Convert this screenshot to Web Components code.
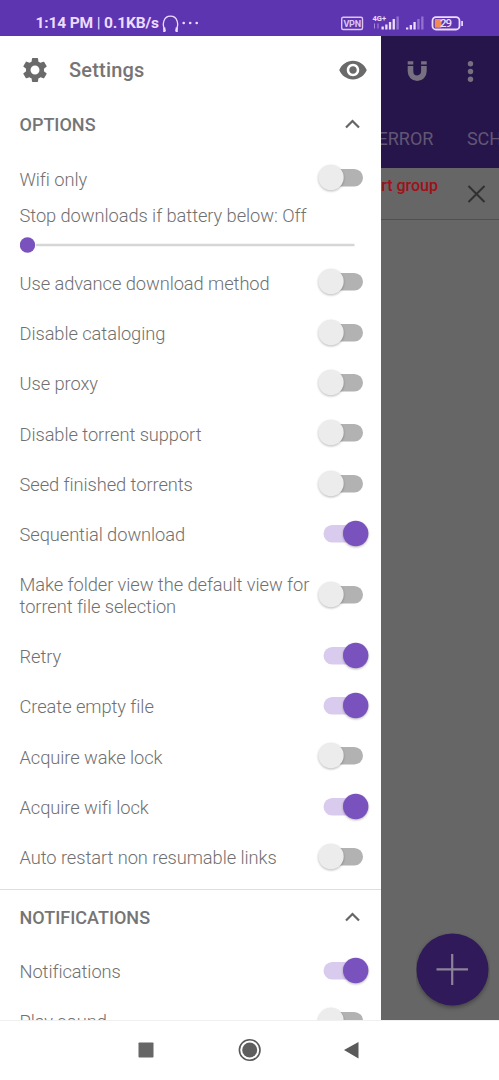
<!DOCTYPE html>
<html lang="en">
<head>
<meta charset="utf-8">
<title>Settings</title>
<style>
html,body{margin:0;height:100%;overflow:hidden;background:#fff;font-family:Roboto,"Noto Sans",sans-serif}
</style>
</head>
<body>
<phone-screen>
  <status-bar slot="status"></status-bar>
  <settings-drawer slot="drawer" heading="Settings">
    <section-head>OPTIONS</section-head>
    <setting-row class="first">Wifi only</setting-row>
    <battery-slider>Stop downloads if battery below: Off</battery-slider>
    <setting-row>Use advance download method</setting-row>
    <setting-row>Disable cataloging</setting-row>
    <setting-row>Use proxy</setting-row>
    <setting-row>Disable torrent support</setting-row>
    <setting-row>Seed finished torrents</setting-row>
    <setting-row on>Sequential download</setting-row>
    <setting-row tall>Make folder view the default view for<br>torrent file selection</setting-row>
    <setting-row on>Retry</setting-row>
    <setting-row on>Create empty file</setting-row>
    <setting-row>Acquire wake lock</setting-row>
    <setting-row on>Acquire wifi lock</setting-row>
    <setting-row>Auto restart non resumable links</setting-row>
    <section-head divided>NOTIFICATIONS</section-head>
    <setting-row on>Notifications</setting-row>
    <setting-row>Play sound</setting-row>
  </settings-drawer>
  <download-page slot="page"></download-page>
  <nav-bar slot="nav"></nav-bar>
</phone-screen>
<script>
function define(name, html) {
  const t = document.createElement('template');
  t.innerHTML = html;
  customElements.define(name, class extends HTMLElement {
    constructor() {
      super();
      this.attachShadow({mode: 'open'}).append(t.content.cloneNode(true));
      const h = this.shadowRoot.querySelector('[data-heading]');
      if (h) h.textContent = this.getAttribute('heading');
    }
  });
}

define('phone-screen', `
<style>
:host{display:grid;width:499px;height:1080px;grid-template:36px 984px 60px / 381px 118px;overflow:hidden}
::slotted([slot=status]),::slotted([slot=nav]){grid-column:1 / 3}
</style>
<slot name="status"></slot><slot name="drawer"></slot><slot name="page"></slot><slot name="nav"></slot>`);

define('status-bar', `
<style>
:host{display:flex;align-items:center;background:#5e35b1;color:#ecdcff;height:36px;box-sizing:border-box;padding:9px 34px 0 35.500px;font-weight:700;font-size:15.500px;line-height:20px}
.time{white-space:pre;width:123.500px;letter-spacing:-.14px}
.bar{font-weight:400}
svg{display:block;flex:none}
.icons{margin-left:auto}
</style>
<span class="time">1:14 PM <span class="bar">|</span> 0.1KB/s</span>
<svg width="42" height="20" viewBox="0 0 42 20" style="margin-left:2px"><path d="M4.300 18C.5 11.500 2.500 3.200 9.500 3.200S18.500 11.500 14.700 18" fill="none" stroke="#ecdcff" stroke-width="1.300"/><path d="M3.300 14.500v4.500M15.700 14.500v4.500" stroke="#ecdcff" stroke-width="2.200"/><g fill="#ecdcff"><circle cx="22.700" cy="10" r="1.300"/><circle cx="29.200" cy="10" r="1.300"/><circle cx="35.700" cy="10" r="1.300"/></g></svg>
<svg class="icons" width="126" height="20" viewBox="339.500 12.500 126 20">
  <rect x="342.200" y="16.700" width="20.800" height="12.300" rx="1.500" fill="none" stroke="#d9c6f5" stroke-width="1.400"/>
  <text x="344" y="26.200" font-size="9" font-weight="700" fill="#d9c6f5" textLength="17.500">VPN</text>
  <text x="373" y="20.400" font-size="7.500" font-weight="700" fill="#ecdcff" textLength="13.500">4G+</text>
  <path d="M375 23v5M378.500 23v5" stroke="#a98bdc" stroke-width="1"/>
  <g fill="#ecdcff"><rect x="382" y="26" width="2.300" height="3"/><rect x="385.700" y="24" width="2.300" height="5"/><rect x="389.400" y="21.500" width="2.300" height="7.500"/><rect x="393.100" y="18.500" width="2.300" height="10.500"/><rect x="406.500" y="27" width="2.300" height="2"/><rect x="410.200" y="24.500" width="2.300" height="4.500"/><rect x="413.900" y="21.500" width="2.300" height="7.500"/></g>
  <g fill="#9372cf"><rect x="397" y="16" width="2.300" height="13"/><rect x="417.800" y="18.500" width="2.300" height="10.500"/><rect x="421.700" y="16" width="2.300" height="13"/></g>
  <rect x="433" y="16.700" width="27" height="12.300" rx="3.500" fill="none" stroke="#ecdcff" stroke-width="1.800"/>
  <rect x="435.300" y="18.600" width="6.700" height="8.600" rx="1" fill="#f08b55"/>
  <path d="M462.600 20.500v5" stroke="#ecdcff" stroke-width="1.700"/>
  <text x="440.500" y="26.900" font-size="11.500" font-weight="500" fill="#ecdcff" textLength="12">29</text>
</svg>`);

define('settings-drawer', `
<style>
:host{display:flex;flex-direction:column;background:#fff;overflow:hidden;height:984px;color:#757575}
header{display:flex;align-items:center;height:69px;box-sizing:border-box;flex:none;padding:0 13px 1px 20px}
h1{margin:0 auto 0 19px;font-size:20px;font-weight:500;letter-spacing:.2px;line-height:24px}
svg{fill:#6a6a6a;display:block}
</style>
<header>
<svg width="30" height="30" viewBox="0 0 24 24"><path d="M19.140 12.940c.04-.3.060-.61.060-.94 0-.32-.02-.64-.07-.94l2.030-1.580c.18-.14.230-.41.120-.61l-1.920-3.320c-.12-.22-.37-.29-.59-.22l-2.390.96c-.5-.38-1.030-.7-1.620-.94l-.36-2.540c-.04-.24-.24-.41-.48-.41h-3.840c-.24 0-.43.170-.47.410l-.36 2.540c-.59.240-1.130.570-1.620.940l-2.390-.96c-.22-.08-.47 0-.59.220L2.740 8.870c-.12.210-.08.470.120.610l2.030 1.580c-.05.300-.09.630-.09.940s.02.640.070.940l-2.030 1.580c-.18.140-.23.410-.12.610l1.920 3.320c.12.220.370.290.590.220l2.390-.96c.5.380 1.030.700 1.620.940l.36 2.540c.05.240.240.410.480.410h3.840c.24 0 .44-.17.470-.41l.36-2.540c.59-.24 1.130-.56 1.620-.94l2.390.960c.22.080.470 0 .59-.22l1.920-3.320c.12-.22.070-.47-.12-.61l-2.010-1.580zM12 15.600c-1.980 0-3.600-1.620-3.600-3.600s1.620-3.600 3.600-3.600 3.600 1.620 3.600 3.600-1.620 3.600-3.600 3.600z"/></svg>
<h1 data-heading></h1>
<svg width="30" height="30" viewBox="0 0 24 24"><path d="M12 4.500C7 4.500 2.730 7.610 1 12c1.730 4.390 6 7.500 11 7.500s9.270-3.110 11-7.500c-1.730-4.390-6-7.500-11-7.500zM12 17c-2.760 0-5-2.240-5-5s2.240-5 5-5 5 2.240 5 5-2.240 5-5 5zm0-8c-1.660 0-3 1.340-3 3s1.340 3 3 3 3-1.340 3-3-1.340-3-3-3z"/></svg>
</header>
<slot></slot>`);

define('section-head', `
<style>
:host{display:flex;align-items:center;justify-content:space-between;flex:none;height:40px;padding:0 20px 7px 19.500px;font-size:18px;font-weight:500;line-height:24px;color:#757575}
:host([divided]){border-top:1px solid #dedede;margin-top:5.500px;height:57px;padding-bottom:0}
svg{display:block;position:relative;top:-1px}
</style>
<slot></slot>
<svg width="17" height="12" viewBox="0 0 17 12"><path d="M2 9.500L8.500 3L15 9.500" fill="none" stroke="#666" stroke-width="2.200"/></svg>`);

define('toggle-switch', `
<style>
:host{display:block;width:56px;height:34px;flex:none;margin-bottom:2px}
svg{display:block}
.on{display:none}
:host([on]) .on{display:block}
:host([on]) .off{display:none}
circle{filter:drop-shadow(0 1px 1px rgba(0,0,0,.28))}
</style>
<svg class="off" width="56" height="34"><rect x="8" y="8" width="40" height="17.500" rx="8.750" fill="#b2b2b2"/><circle cx="16" cy="16.500" r="12.700" fill="#ececec"/></svg>
<svg class="on" width="56" height="34"><rect x="8.500" y="8" width="40" height="17.500" rx="8.750" fill="#d8cbee"/><circle cx="40.700" cy="16.500" r="12.700" fill="#7a52bd"/></svg>`);

define('setting-row', `
<style>
:host{display:flex;align-items:center;flex:none;height:50.300px;box-sizing:border-box;padding:0 10px 0 19.500px;font-size:18.300px;letter-spacing:-.07px;font-weight:300;line-height:21.500px;color:#707070}
:host([tall]){height:71.500px}
:host(.first){height:46px;margin-top:4.300px}
span{flex:1;white-space:nowrap}
</style>
<span><slot></slot></span><toggle-switch></toggle-switch>`);

define('battery-slider', `
<style>
:host{display:block;flex:none;height:56px;box-sizing:border-box;padding:3px 19px 0 19.500px;font-size:18.300px;letter-spacing:-.07px;font-weight:300;line-height:22px;color:#707070;white-space:nowrap}
svg{display:block;margin-top:10px}
</style>
<slot></slot>
<svg width="336" height="16"><path d="M16 8H334.500" stroke="#d6d6d6" stroke-width="2.500"/><circle cx="7.500" cy="8" r="7.700" fill="#7a52bd"/></svg>`);

define('download-page', `
<style>
:host{display:flex;flex-direction:column;background:#666;overflow:hidden;height:984px;position:relative}
.app{height:132px;background:#26154a;flex:none}
.actions{display:flex;height:70px;align-items:center}
.tabs{display:flex;height:62px;box-sizing:border-box;padding-top:3px;align-items:center;margin-left:-3.500px;font-size:18px;color:#615775;white-space:nowrap;line-height:24px}
.tabs span+span{margin-left:33.500px}
.notice{height:52px;border-bottom:1px solid #505050;flex:none;display:flex;box-sizing:border-box}
.msg{width:57px;display:flex;justify-content:flex-end;white-space:nowrap;color:#a01018;font-size:16px;font-weight:500;line-height:20px;padding-top:8px;overflow:hidden}
.fab{position:absolute;left:35px;top:897px}
svg{display:block}
</style>
<div class="app">
<div class="actions">
<svg width="118" height="70" viewBox="381 36 118 70"><path d="M410.500 66v5.500a6.700 6.700 0 0 0 13.400 0v-5.500" fill="none" stroke="#777081" stroke-width="5.600"/><path d="M407.700 61.200h5.600v3.300h-5.600zM421.100 61.200h5.600v3.300h-5.600z" fill="#777081"/><g fill="#777081"><circle cx="470.500" cy="63.700" r="2.700"/><circle cx="470.500" cy="71.500" r="2.700"/><circle cx="470.500" cy="79.300" r="2.700"/></g></svg>
</div>
<div class="tabs"><span>ERROR</span><span>SCH</span></div>
</div>
<div class="notice"><div class="msg"><span>rt group</span></div>
<svg width="60" height="50" viewBox="438 168 60 50"><path d="M468.500 186L484.500 202M484.500 186L468.500 202" stroke="#303030" stroke-width="2"/></svg></div>
<svg class="fab" width="74" height="80" viewBox="0 0 74 80"><circle cx="36.500" cy="36.500" r="36" fill="#301a5a" style="filter:drop-shadow(0 2px 2px rgba(0,0,0,.35))"/><path d="M20.500 36.300H52M36.200 21V52" stroke="#8c8398" stroke-width="2.200"/></svg>`);

define('nav-bar', `
<style>
:host{display:block;background:#fff;height:60px;border-top:1px solid #f0f0f0;box-sizing:border-box}
svg{display:block}
</style>
<svg width="499" height="59" viewBox="0 1021 499 59"><rect x="138.500" y="1042.500" width="15" height="15" rx=".8" fill="#666"/><circle cx="249.700" cy="1050" r="10.300" fill="none" stroke="#585858" stroke-width="1.600"/><circle cx="249.700" cy="1050" r="7.500" fill="#5e5e5e"/><path d="M344 1050L358.500 1042V1058.500Z" fill="#5a5a5a"/></svg>`);

document.querySelectorAll('setting-row[on]').forEach(r =>
  r.shadowRoot.querySelector('toggle-switch').setAttribute('on', ''));
</script>
</body>
</html>
